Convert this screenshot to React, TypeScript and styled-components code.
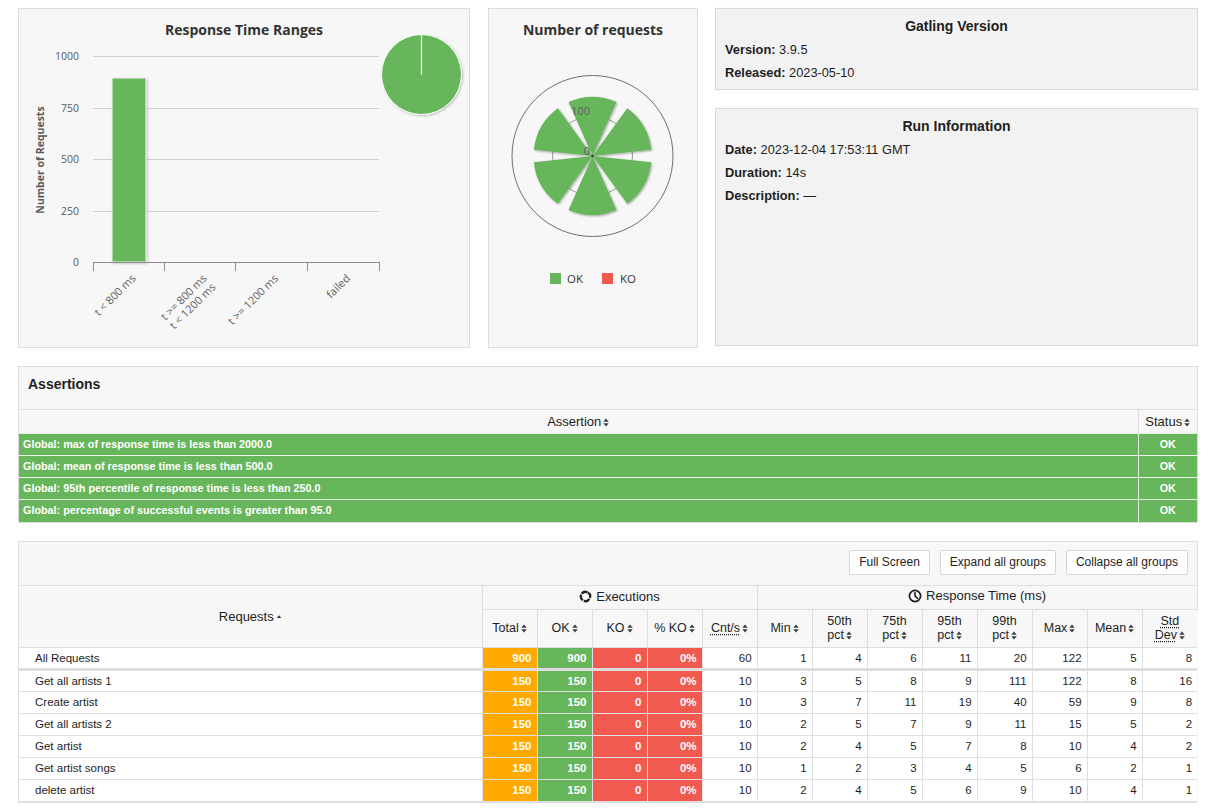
import React from "react";
import styled, { createGlobalStyle } from "styled-components";

const GlobalStyle = createGlobalStyle`
  html, body { margin: 0; padding: 0; background: #ffffff; }
  body { font-family: "Liberation Sans", Arial, sans-serif; color: #1e1e1e; }
  * { box-sizing: border-box; }
`;

const GREEN = "#68b65c";
const ORANGE = "#ffa900";
const RED = "#f15b4f";
const CHART_FONT = `"Open Sans", "DejaVu Sans", sans-serif`;

const Page = styled.div`
  width: 1198px;
  padding: 8px 0 0 18px;
  display: flex;
  flex-direction: column;
`;

const TopRow = styled.div`
  display: flex;
  align-items: flex-start;
  gap: 18px;
  width: 1180px;
`;

const ChartPanel = styled.div<{ $w: number }>`
  width: ${(p) => p.$w}px;
  height: 340px;
  flex: none;
  background: #f7f7f7;
  border: 1px solid #dcdcdc;
`;

const ChartSvg = styled.svg`
  display: block;
  font-family: ${CHART_FONT};
`;

const InfoColumn = styled.div`
  flex: 1;
  display: flex;
  flex-direction: column;
  gap: 18px;
  margin-left: -1px;
`;

const InfoPanel = styled.div<{ $h: number }>`
  height: ${(p) => p.$h}px;
  background: #f2f2f2;
  border: 1px solid #d9d9d9;
  box-shadow: 0 0 1px rgba(0, 0, 0, 0.08);
  padding: 9px 9px 6px;
  font-size: 12.8px;
`;

const InfoTitle = styled.div`
  text-align: center;
  font-weight: bold;
  font-size: 14px;
  line-height: 16px;
  margin-bottom: 4px;
  color: #1e1e1e;
`;

const InfoLine = styled.div`
  line-height: 23px;
  color: #1e1e1e;
`;

const InfoKey = styled.span`
  font-weight: bold;
`;

const Section = styled.div<{ $mt: number }>`
  margin-top: ${(p) => p.$mt}px;
  width: 1180px;
  border: 1px solid #dddddd;
  background: #f7f7f7;
`;

const SectionTitle = styled.div`
  height: 42px;
  padding: 9px 9px 0;
  font-weight: bold;
  font-size: 14px;
  line-height: 16px;
  color: #1e1e1e;
`;

const AssertTable = styled.table`
  width: 100%;
  border-collapse: collapse;
  table-layout: fixed;
`;

const AssertHead = styled.th<{ $w?: number }>`
  ${(p) => (p.$w ? `width: ${p.$w}px;` : "")}
  height: 24px;
  padding: 0;
  font-weight: normal;
  font-size: 13px;
  color: #1e1e1e;
  text-align: center;
  border-top: 1px solid #dddddd;
  border-left: 1px solid #dddddd;
  &:first-child { border-left: none; }
`;

const AssertCell = styled.td<{ $center?: boolean }>`
  height: 22px;
  padding: 0 4px;
  line-height: 21px;
  background: ${GREEN};
  color: #ffffff;
  font-weight: bold;
  font-size: 10.8px;
  text-align: ${(p) => (p.$center ? "center" : "left")};
  border-top: 1px solid #e8f3e6;
  border-left: 1px solid #e8f3e6;
  &:first-child { border-left: none; }
`;

const StatsBar = styled.div`
  height: 43px;
  display: flex;
  justify-content: flex-end;
  align-items: flex-start;
  gap: 10px;
  padding: 8px 9px 0;
`;

const BarButton = styled.button`
  height: 25px;
  padding: 0 9px;
  background: #ffffff;
  border: 1px solid #d6d6d6;
  border-radius: 2px;
  font-family: "Liberation Sans", Arial, sans-serif;
  font-size: 12px;
  color: #1e1e1e;
  cursor: pointer;
`;

const StatsTable = styled.table`
  width: 100%;
  border-collapse: collapse;
  table-layout: fixed;
  background: #f7f7f7;
`;

const GroupHead = styled.th`
  height: 24px;
  padding: 0;
  font-weight: normal;
  font-size: 13px;
  color: #1e1e1e;
  border: 1px solid #dddddd;
  white-space: nowrap;
  & > span { display: inline-flex; align-items: center; gap: 4px; }
`;

const ReqHead = styled.th`
  padding: 0;
  font-weight: normal;
  font-size: 13px;
  color: #1e1e1e;
  border: 1px solid #dddddd;
  border-left: none;
`;

const ColHead = styled.th`
  height: 38px;
  padding: 0 2px;
  font-weight: normal;
  font-size: 12.5px;
  line-height: 14px;
  color: #1e1e1e;
  border: 1px solid #dddddd;
  &:last-child { border-right: none; }
`;

const Abbr = styled.abbr`
  text-decoration: underline dotted;
  text-underline-offset: 2px;
  cursor: help;
`;

type Tone = "total" | "ok" | "ko" | "plain";
const toneBg: Record<Tone, string> = {
  total: ORANGE,
  ok: GREEN,
  ko: RED,
  plain: "#ffffff",
};

const NameCell = styled.td<{ $sep?: boolean }>`
  height: 22px;
  padding: 0 0 0 16px;
  background: #ffffff;
  font-size: 11.5px;
  color: #1e1e1e;
  border-top: 1px solid #e0e0e0;
  border-bottom: ${(p) => (p.$sep ? "3px solid #dddddd" : "1px solid #e0e0e0")};
  white-space: nowrap;
`;

const NumCell = styled.td<{ $tone: Tone; $sep?: boolean }>`
  height: 22px;
  padding: 0 5px 0 0;
  text-align: right;
  background: ${(p) => toneBg[p.$tone]};
  color: ${(p) => (p.$tone === "plain" ? "#1e1e1e" : "#ffffff")};
  font-weight: ${(p) => (p.$tone === "plain" ? "normal" : "bold")};
  font-size: 11.5px;
  border-left: 1px solid #e0e0e0;
  border-top: 1px solid #e0e0e0;
  border-bottom: ${(p) => (p.$sep ? "3px solid #dddddd" : "1px solid #e0e0e0")};
  &:last-child { border-right: none; }
`;

const SortSvg = styled.svg`
  display: inline-block;
  vertical-align: -1px;
  margin-left: 2px;
  fill: #3c3c3c;
`;

const SortIcon = ({ asc }: { asc?: boolean }) =>
  asc ? (
    <SortSvg width="6" height="9" viewBox="0 0 6 9">
      <path d="M0.6 5 L3 2.2 L5.4 5 Z" />
    </SortSvg>
  ) : (
    <SortSvg width="6" height="9" viewBox="0 0 6 9">
      <path d="M0.3 3.8 L3 0.5 L5.7 3.8 Z" />
      <path d="M0.3 5.2 L3 8.5 L5.7 5.2 Z" />
    </SortSvg>
  );

const ExecIcon = () => (
  <svg width="13" height="13" viewBox="0 0 14 14">
    <circle
      cx="7"
      cy="7"
      r="5"
      fill="none"
      stroke="#1e1e1e"
      strokeWidth="2.4"
      strokeDasharray="6.6 1.25"
      transform="rotate(-60 7 7)"
    />
  </svg>
);

const ClockIcon = () => (
  <svg width="14" height="14" viewBox="0 0 14 14">
    <circle cx="7" cy="7" r="5.6" fill="none" stroke="#1e1e1e" strokeWidth="1.7" />
    <polyline points="7,3.6 7,7 9.3,9.2" fill="none" stroke="#1e1e1e" strokeWidth="1.6" strokeLinecap="round" />
  </svg>
);

/* ---------- Response Time Ranges chart ---------- */

const gridYs = [
  { v: "1000", y: 47 },
  { v: "750", y: 99 },
  { v: "500", y: 150 },
  { v: "250", y: 202 },
  { v: "0", y: 253 },
];
const ticks = [74, 145, 216, 288, 360];

const RangesChart = () => (
  <ChartSvg width="450" height="338" viewBox="0 0 450 338">
    <defs>
      <filter id="shadowA" x="-20%" y="-20%" width="140%" height="140%">
        <feDropShadow dx="1" dy="1" stdDeviation="1" floodColor="#000" floodOpacity="0.25" />
      </filter>
    </defs>
    <text x="225" y="26" textAnchor="middle" fontSize="14" fontWeight="700" fill="#333">
      Response Time Ranges
    </text>
    {gridYs.map((g) => (
      <g key={g.v}>
        {g.v !== "0" && <line x1="74" x2="360" y1={g.y + 0.5} y2={g.y + 0.5} stroke="#cfcfcf" strokeWidth="1" />}
        <text x="60" y={g.y + 4} textAnchor="end" fontSize="10.5" fill="#5a5a5a">
          {g.v}
        </text>
      </g>
    ))}
    <text
      x="22"
      y="151"
      transform="rotate(-90 22 151)"
      textAnchor="middle"
      dominantBaseline="middle"
      fontSize="10.5"
      fontWeight="700"
      fill="#5a5a5a"
    >
      Number of Requests
    </text>
    <rect x="93" y="69" width="34" height="184" fill={GREEN} stroke="#f4f4f4" strokeWidth="1" filter="url(#shadowA)" />
    <line x1="74" x2="360" y1="253.5" y2="253.5" stroke="#8c8c8c" strokeWidth="1" />
    {ticks.map((x) => (
      <line key={x} x1={x + 0.5} x2={x + 0.5} y1="253" y2="262" stroke="#8c8c8c" strokeWidth="1" />
    ))}
    <g fontSize="11" fill="#5f5f5f">
      <text x="117.5" y="270" textAnchor="end" transform="rotate(-45 117.5 270)">
        t &lt; 800 ms
      </text>
      <text x="188.5" y="270" textAnchor="end" transform="rotate(-45 188.5 270)">
        <tspan x="188.5">t &gt;= 800 ms</tspan>
        <tspan x="188.5" dy="12.5">t &lt; 1200 ms</tspan>
      </text>
      <text x="260" y="270" textAnchor="end" transform="rotate(-45 260 270)">
        t &gt;= 1200 ms
      </text>
      <text x="332" y="270" textAnchor="end" transform="rotate(-45 332 270)">
        failed
      </text>
    </g>
    <g filter="url(#shadowA)">
      <circle cx="402.5" cy="65.5" r="40" fill={GREEN} stroke="#ffffff" strokeWidth="1" />
    </g>
    <line x1="402.5" x2="402.5" y1="25.5" y2="65.5" stroke="#ffffff" strokeWidth="1.2" />
  </ChartSvg>
);

/* ---------- Number of requests polar chart ---------- */

const PCX = 103.5;
const PCY = 147;
const pt = (deg: number, r: number) => {
  const a = (deg * Math.PI) / 180;
  return `${(PCX + r * Math.sin(a)).toFixed(2)} ${(PCY - r * Math.cos(a)).toFixed(2)}`;
};
const wedge = (center: number, r: number) =>
  `M ${PCX} ${PCY} L ${pt(center - 24, r)} A ${r} ${r} 0 0 1 ${pt(center + 24, r)} Z`;

const RequestsChart = () => (
  <ChartSvg width="208" height="338" viewBox="0 0 208 338">
    <defs>
      <filter id="shadowB" x="-20%" y="-20%" width="140%" height="140%">
        <feDropShadow dx="1" dy="1" stdDeviation="1" floodColor="#000" floodOpacity="0.35" />
      </filter>
    </defs>
    <text x="104" y="26" textAnchor="middle" fontSize="14" fontWeight="700" fill="#333">
      Number of requests
    </text>
    <circle cx={PCX} cy={PCY} r="80.5" fill="none" stroke="#6f6f6f" strokeWidth="1" />
    <circle cx={PCX} cy={PCY} r="40" fill="none" stroke="#9a9a9a" strokeWidth="1" />
    <g filter="url(#shadowB)">
      {[0, 60, 120, 180, 240, 300].map((c) => (
        <path key={c} d={wedge(c, 59)} fill={GREEN} />
      ))}
    </g>
    <circle cx={PCX} cy={PCY} r="1.3" fill="#333" />
    <text x="101" y="106" textAnchor="end" fontSize="11" fill="#5f5f5f">
      100
    </text>
    <text x="101" y="146" textAnchor="end" fontSize="11" fill="#5f5f5f">
      0
    </text>
    <rect x="61" y="264" width="11" height="11" fill={GREEN} />
    <text x="78" y="274" fontSize="11.5" fill="#333">
      OK
    </text>
    <rect x="113" y="264" width="11" height="11" fill={RED} />
    <text x="131" y="274" fontSize="11.5" fill="#333">
      KO
    </text>
  </ChartSvg>
);

/* ---------- data ---------- */

const assertions = [
  "Global: max of response time is less than 2000.0",
  "Global: mean of response time is less than 500.0",
  "Global: 95th percentile of response time is less than 250.0",
  "Global: percentage of successful events is greater than 95.0",
];

type Row = [string, ...(number | string)[]];
const rows: Row[] = [
  ["All Requests", 900, 900, 0, "0%", 60, 1, 4, 6, 11, 20, 122, 5, 8],
  ["Get all artists 1", 150, 150, 0, "0%", 10, 3, 5, 8, 9, 111, 122, 8, 16],
  ["Create artist", 150, 150, 0, "0%", 10, 3, 7, 11, 19, 40, 59, 9, 8],
  ["Get all artists 2", 150, 150, 0, "0%", 10, 2, 5, 7, 9, 11, 15, 5, 2],
  ["Get artist", 150, 150, 0, "0%", 10, 2, 4, 5, 7, 8, 10, 4, 2],
  ["Get artist songs", 150, 150, 0, "0%", 10, 1, 2, 3, 4, 5, 6, 2, 1],
  ["delete artist", 150, 150, 0, "0%", 10, 2, 4, 5, 6, 9, 10, 4, 1],
];
const tones: Tone[] = ["total", "ok", "ko", "ko"];

const colHeads: React.ReactNode[] = [
  <>Total<SortIcon /></>,
  <>OK<SortIcon /></>,
  <>KO<SortIcon /></>,
  <>% KO<SortIcon /></>,
  <><Abbr title="Count of events per second">Cnt/s</Abbr><SortIcon /></>,
  <>Min<SortIcon /></>,
  <>50th<br />pct<SortIcon /></>,
  <>75th<br />pct<SortIcon /></>,
  <>95th<br />pct<SortIcon /></>,
  <>99th<br />pct<SortIcon /></>,
  <>Max<SortIcon /></>,
  <>Mean<SortIcon /></>,
  <><Abbr title="Standard Deviation">Std<br />Dev</Abbr><SortIcon /></>,
];

export default function App() {
  return (
    <>
      <GlobalStyle />
      <Page>
        <TopRow>
          <ChartPanel $w={452}>
            <RangesChart />
          </ChartPanel>
          <ChartPanel $w={210}>
            <RequestsChart />
          </ChartPanel>
          <InfoColumn>
            <InfoPanel $h={82}>
              <InfoTitle>Gatling Version</InfoTitle>
              <InfoLine>
                <InfoKey>Version:</InfoKey> 3.9.5
              </InfoLine>
              <InfoLine>
                <InfoKey>Released:</InfoKey> 2023-05-10
              </InfoLine>
            </InfoPanel>
            <InfoPanel $h={238}>
              <InfoTitle>Run Information</InfoTitle>
              <InfoLine>
                <InfoKey>Date:</InfoKey> 2023-12-04 17:53:11 GMT
              </InfoLine>
              <InfoLine>
                <InfoKey>Duration:</InfoKey> 14s
              </InfoLine>
              <InfoLine>
                <InfoKey>Description:</InfoKey> —
              </InfoLine>
            </InfoPanel>
          </InfoColumn>
        </TopRow>

        <Section $mt={18}>
          <SectionTitle>Assertions</SectionTitle>
          <AssertTable>
            <thead>
              <tr>
                <AssertHead>
                  Assertion<SortIcon />
                </AssertHead>
                <AssertHead $w={59}>
                  Status<SortIcon />
                </AssertHead>
              </tr>
            </thead>
            <tbody>
              {assertions.map((a) => (
                <tr key={a}>
                  <AssertCell>{a}</AssertCell>
                  <AssertCell $center>OK</AssertCell>
                </tr>
              ))}
            </tbody>
          </AssertTable>
        </Section>

        <Section $mt={18}>
          <StatsBar>
            <BarButton>Full Screen</BarButton>
            <BarButton>Expand all groups</BarButton>
            <BarButton>Collapse all groups</BarButton>
          </StatsBar>
          <StatsTable>
            <colgroup>
              <col style={{ width: 463 }} />
              {colHeads.map((_, i) => (
                <col key={i} style={{ width: 55 }} />
              ))}
            </colgroup>
            <thead>
              <tr>
                <ReqHead rowSpan={2}>
                  Requests
                  <SortIcon asc />
                </ReqHead>
                <GroupHead colSpan={5}>
                  <span>
                    <ExecIcon />
                    Executions
                  </span>
                </GroupHead>
                <GroupHead colSpan={8}>
                  <span>
                    <ClockIcon />
                    Response Time (ms)
                  </span>
                </GroupHead>
              </tr>
              <tr>
                {colHeads.map((h, i) => (
                  <ColHead key={i}>{h}</ColHead>
                ))}
              </tr>
            </thead>
            <tbody>
              {rows.map((r, ri) => (
                <tr key={r[0]}>
                  <NameCell $sep={ri === 0}>{r[0]}</NameCell>
                  {r.slice(1).map((v, ci) => (
                    <NumCell key={ci} $tone={tones[ci] ?? "plain"} $sep={ri === 0}>
                      {v}
                    </NumCell>
                  ))}
                </tr>
              ))}
            </tbody>
          </StatsTable>
        </Section>
      </Page>
    </>
  );
}
